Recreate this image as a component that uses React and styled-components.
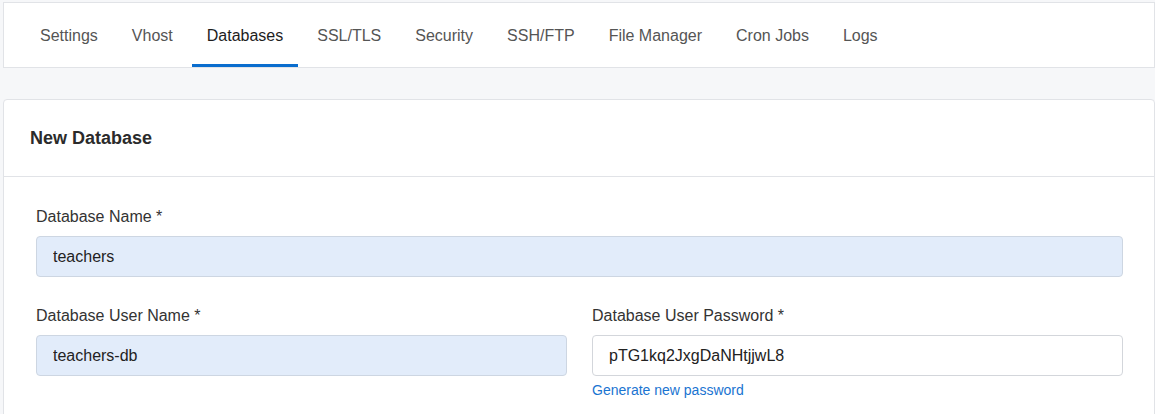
import React from "react";
import styled, { createGlobalStyle } from "styled-components";

const Global = createGlobalStyle`
  html, body { margin: 0; padding: 0; background: #f6f7f9; }
  body { font-family: "Liberation Sans", Arial, Helvetica, sans-serif; color: #333; }
  * { box-sizing: border-box; }
`;

const Page = styled.div`
  padding: 2px 0 0 3px;
  display: flex;
  flex-direction: column;
  gap: 31px;
`;

const TabBar = styled.nav`
  display: flex;
  align-items: stretch;
  gap: 4px;
  padding: 0 21px;
  background: #fff;
  border: 1px solid #e1e3e7;
`;

const Tab = styled.div`
  height: 64px;
  padding: 5px 15px 0;
  display: flex;
  align-items: center;
  font-size: 16px;
  color: ${(p) => (p.$active ? "#1d1d1d" : "#555")};
  border-bottom: 3px solid ${(p) => (p.$active ? "#0a6dce" : "transparent")};
  cursor: pointer;
  white-space: nowrap;
`;

const Card = styled.section`
  background: #fff;
  border: 1px solid #e1e3e7;
  border-radius: 4px 4px 0 0;
`;

const CardHeader = styled.header`
  height: 77px;
  padding: 1px 26px 0;
  display: flex;
  align-items: center;
  border-bottom: 1px solid #e1e3e7;
  font-size: 18px;
  font-weight: 700;
  color: #2b2b2b;
`;

const CardBody = styled.div`
  padding: 28px 31px 20px 32px;
  display: flex;
  flex-direction: column;
  gap: 27px;
`;

const Row = styled.div`
  display: grid;
  grid-template-columns: ${(p) => (p.$cols === 2 ? "1fr 1fr" : "1fr")};
  column-gap: 25px;
`;

const Field = styled.div`
  display: flex;
  flex-direction: column;
`;

const Label = styled.label`
  font-size: 16px;
  line-height: 24px;
  color: #333;
  margin-bottom: 7px;
`;

const Input = styled.input`
  height: 41px;
  width: 100%;
  padding: 0 16px;
  font-family: inherit;
  font-size: 16px;
  color: #222;
  background: ${(p) => (p.$filled ? "#e2ecfa" : "#fff")};
  border: 1px solid ${(p) => (p.$filled ? "#cdd6e2" : "#d3d6db")};
  border-radius: 4px;
  outline: none;
`;

const Link = styled.a`
  margin-top: 4px;
  font-size: 14px;
  line-height: 21px;
  color: #1a74d1;
  text-decoration: none;
  cursor: pointer;
`;

const tabs = ["Settings", "Vhost", "Databases", "SSL/TLS", "Security", "SSH/FTP", "File Manager", "Cron Jobs", "Logs"];

export default function App() {
  return (
    <>
      <Global />
      <Page>
        <TabBar>
          {tabs.map((t) => (
            <Tab key={t} $active={t === "Databases"}>{t}</Tab>
          ))}
        </TabBar>
        <Card>
          <CardHeader>New Database</CardHeader>
          <CardBody>
            <Row>
              <Field>
                <Label>Database Name *</Label>
                <Input $filled defaultValue="teachers" />
              </Field>
            </Row>
            <Row $cols={2}>
              <Field>
                <Label>Database User Name *</Label>
                <Input $filled defaultValue="teachers-db" />
              </Field>
              <Field>
                <Label>Database User Password *</Label>
                <Input defaultValue="pTG1kq2JxgDaNHtjjwL8" />
                <Link>Generate new password</Link>
              </Field>
            </Row>
          </CardBody>
        </Card>
      </Page>
    </>
  );
}
